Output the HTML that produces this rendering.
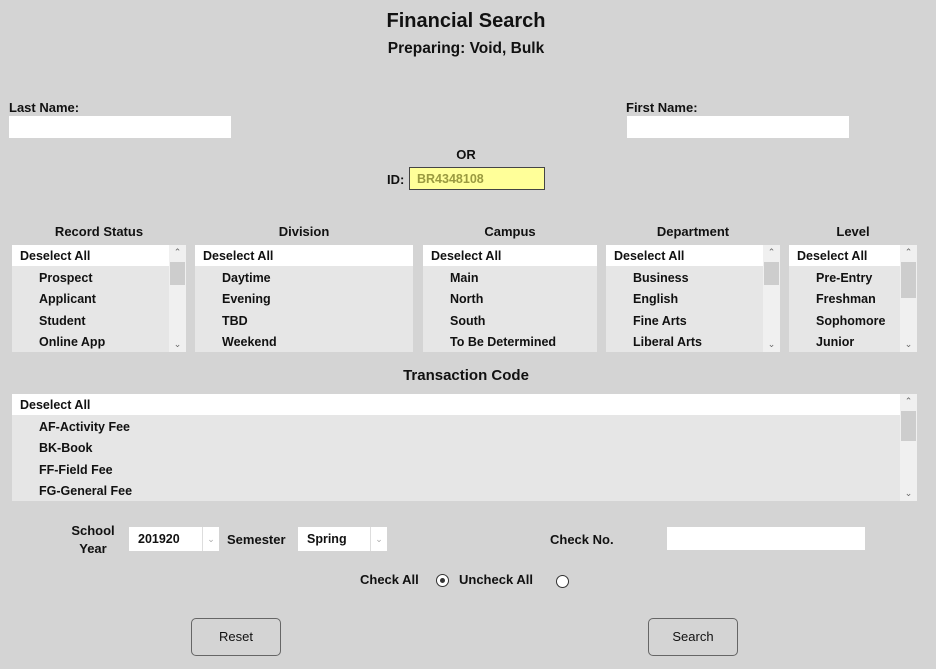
<!DOCTYPE html>
<html><head><meta charset="utf-8"><style>
body{margin:0;width:936px;height:669px;background:#d4d4d4;font-family:"Liberation Sans",sans-serif;font-weight:bold;font-size:12.5px;color:#111;position:relative;overflow:hidden}
.a{position:absolute;white-space:nowrap}
.c{transform:translateX(-50%)}
.inp{position:absolute;background:#fff;height:22px}
.list{position:absolute;background:#e6e6e6;overflow:hidden}
.list .d{background:#fff;height:21px;line-height:23px;padding-left:8px}
.list .i{height:21.3px;line-height:21.3px;padding-left:27px;position:relative;top:2px}
.sb{position:absolute;right:0;top:0;bottom:0;width:17px;background:#f0f0f0}
.sb .t{position:absolute;left:1px;right:1px;top:17px;height:23px;background:#cdcdcd}
.sb .u,.sb .w{position:absolute;left:0;width:17px;text-align:center;font-size:9px;color:#666;font-weight:normal}
.sb .u{top:2px}.sb .w{bottom:2px}
.btn{position:absolute;width:88px;height:36px;border:1px solid #666;border-radius:5px;text-align:center;line-height:36px;font-weight:normal;font-size:13px}
.sel{position:absolute;background:#fff;height:24px;line-height:25px;padding-left:9px;box-sizing:border-box}
.sel .ar{position:absolute;right:0;top:0;width:16px;height:24px;border-left:1px solid #ddd;color:#aaa;font-size:9px;text-align:center;font-weight:normal}
.rad{position:absolute;width:11px;height:11px;border:1px solid #333;border-radius:50%;background:#fff}
</style></head><body>
<div class="a c" style="left:466px;top:10px;font-size:20px">Financial Search</div>
<div class="a c" style="left:466px;top:40px;font-size:15.5px">Preparing: Void, Bulk</div>
<div class="a" style="left:9px;top:100px;font-size:13px">Last Name:</div>
<div class="inp" style="left:9px;top:116px;width:222px"></div>
<div class="a" style="left:626px;top:100px;font-size:13px">First Name:</div>
<div class="inp" style="left:627px;top:116px;width:222px"></div>
<div class="a c" style="left:466px;top:147px;font-size:13px">OR</div>
<div class="a" style="left:387px;top:172px;font-size:13px">ID:</div>
<div class="a" style="left:409px;top:167px;height:21px;background:#ffff99;border:1px solid #444;color:#9a9a40;line-height:23px;padding-left:7px;width:127px">BR4348108</div>

<div class="a c" style="left:99px;top:224px;font-size:13px">Record Status</div>
<div class="a c" style="left:304px;top:224px;font-size:13px">Division</div>
<div class="a c" style="left:510px;top:224px;font-size:13px">Campus</div>
<div class="a c" style="left:693px;top:224px;font-size:13px">Department</div>
<div class="a c" style="left:853px;top:224px;font-size:13px">Level</div>

<div class="list" style="left:12px;top:245px;width:174px;height:107px"><div class="d">Deselect All</div><div class="i">Prospect</div><div class="i">Applicant</div><div class="i">Student</div><div class="i">Online App</div><div class="sb"><div class="u">&#8963;</div><div class="t"></div><div class="w">&#8964;</div></div></div>
<div class="list" style="left:195px;top:245px;width:218px;height:107px"><div class="d">Deselect All</div><div class="i">Daytime</div><div class="i">Evening</div><div class="i">TBD</div><div class="i">Weekend</div></div>
<div class="list" style="left:423px;top:245px;width:174px;height:107px"><div class="d">Deselect All</div><div class="i">Main</div><div class="i">North</div><div class="i">South</div><div class="i">To Be Determined</div></div>
<div class="list" style="left:606px;top:245px;width:174px;height:107px"><div class="d">Deselect All</div><div class="i">Business</div><div class="i">English</div><div class="i">Fine Arts</div><div class="i">Liberal Arts</div><div class="sb"><div class="u">&#8963;</div><div class="t"></div><div class="w">&#8964;</div></div></div>
<div class="list" style="left:789px;top:245px;width:128px;height:107px"><div class="d">Deselect All</div><div class="i">Pre-Entry</div><div class="i">Freshman</div><div class="i">Sophomore</div><div class="i">Junior</div><div class="sb"><div class="u">&#8963;</div><div class="t" style="height:36px"></div><div class="w">&#8964;</div></div></div>

<div class="a c" style="left:466px;top:367px;font-size:15px">Transaction Code</div>
<div class="list" style="left:12px;top:394px;width:905px;height:107px"><div class="d">Deselect All</div><div class="i">AF-Activity Fee</div><div class="i">BK-Book</div><div class="i">FF-Field Fee</div><div class="i">FG-General Fee</div><div class="sb"><div class="u">&#8963;</div><div class="t" style="height:30px"></div><div class="w">&#8964;</div></div></div>

<div class="a c" style="left:93px;top:522px;font-size:13px;text-align:center;line-height:18px">School<br>Year</div>
<div class="sel" style="left:129px;top:527px;width:90px">201920<div class="ar">&#8964;</div></div>
<div class="a" style="left:227px;top:532px;font-size:13px">Semester</div>
<div class="sel" style="left:298px;top:527px;width:89px">Spring<div class="ar">&#8964;</div></div>
<div class="a" style="left:550px;top:532px;font-size:13px">Check No.</div>
<div class="inp" style="left:667px;top:527px;width:198px;height:23px"></div>

<div class="a" style="left:360px;top:572px;font-size:13px">Check All</div>
<div class="rad" style="left:436px;top:574px"><div style="position:absolute;left:3px;top:3px;width:5px;height:5px;border-radius:50%;background:#333"></div></div>
<div class="a" style="left:459px;top:572px;font-size:13px">Uncheck All</div>
<div class="rad" style="left:556px;top:575px"></div>

<div class="btn" style="left:191px;top:618px">Reset</div>
<div class="btn" style="left:648px;top:618px">Search</div>
</body></html>
